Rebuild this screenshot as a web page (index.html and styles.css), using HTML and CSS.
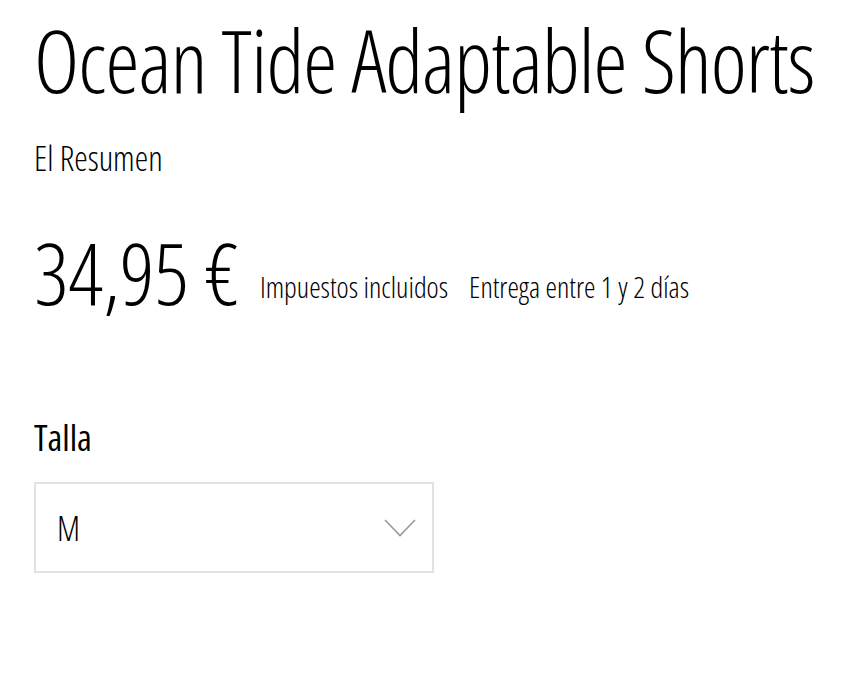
FILE: index.html
```html
<!DOCTYPE html>
<html lang="es">
<head>
<meta charset="utf-8">
<title>Ocean Tide Adaptable Shorts</title>
<link rel="stylesheet" href="styles.css">
</head>
<body>
<main class="product">
  <h1 class="title">Ocean Tide Adaptable Shorts</h1>
  <p class="summary">El Resumen</p>
  <div class="price-row">
    <span class="price">34,95 €</span>
    <span class="note">Impuestos incluidos</span>
    <span class="note">Entrega entre 1 y 2 días</span>
  </div>
  <div class="size">
    <label class="size-label">Talla</label>
    <div class="select">
      <span class="select-value">M</span>
      <svg class="chevron" width="32" height="18" viewBox="0 0 32 18" aria-hidden="true">
        <polyline points="1,1 16,16.5 31,1" fill="none" stroke="#9a9a9a" stroke-width="1.6"/>
      </svg>
    </div>
  </div>
</main>
</body>
</html>
```
FILE: styles.css
```css
html, body {
  margin: 0;
  background: #fff;
}
body {
  font-family: "Open Sans", "Liberation Sans", sans-serif;
  font-stretch: 75%;
  color: #000;
}
.product {
  padding: 10px 0 0 34px;
}
.title {
  margin: 0;
  font-size: 86px;
  font-weight: 300;
  line-height: 100px;
  letter-spacing: -0.9px;
  white-space: nowrap;
}
.summary {
  margin: 28px 0 0;
  font-size: 34px;
  font-weight: 300;
  line-height: 40px;
}
.price-row {
  margin-top: 49px;
  display: flex;
  align-items: flex-end;
  gap: 21px;
}
.price {
  font-size: 85px;
  font-weight: 300;
  line-height: 90px;
}
.note {
  font-size: 29px;
  font-weight: 300;
  line-height: 36px;
  padding-bottom: 12px;
}
.size {
  margin-top: 99px;
}
.size-label {
  display: block;
  font-size: 36px;
  font-weight: 400;
  line-height: 44px;
}
.select {
  margin-top: 22px;
  height: 87px;
  width: 359px;
  border: 2px solid #e2e2e2;
  display: flex;
  align-items: center;
  justify-content: space-between;
  padding: 0 16px 0 21px;
}
.select-value {
  font-size: 34px;
  font-weight: 300;
  line-height: 40px;
}
.chevron {
  display: block;
}
```
